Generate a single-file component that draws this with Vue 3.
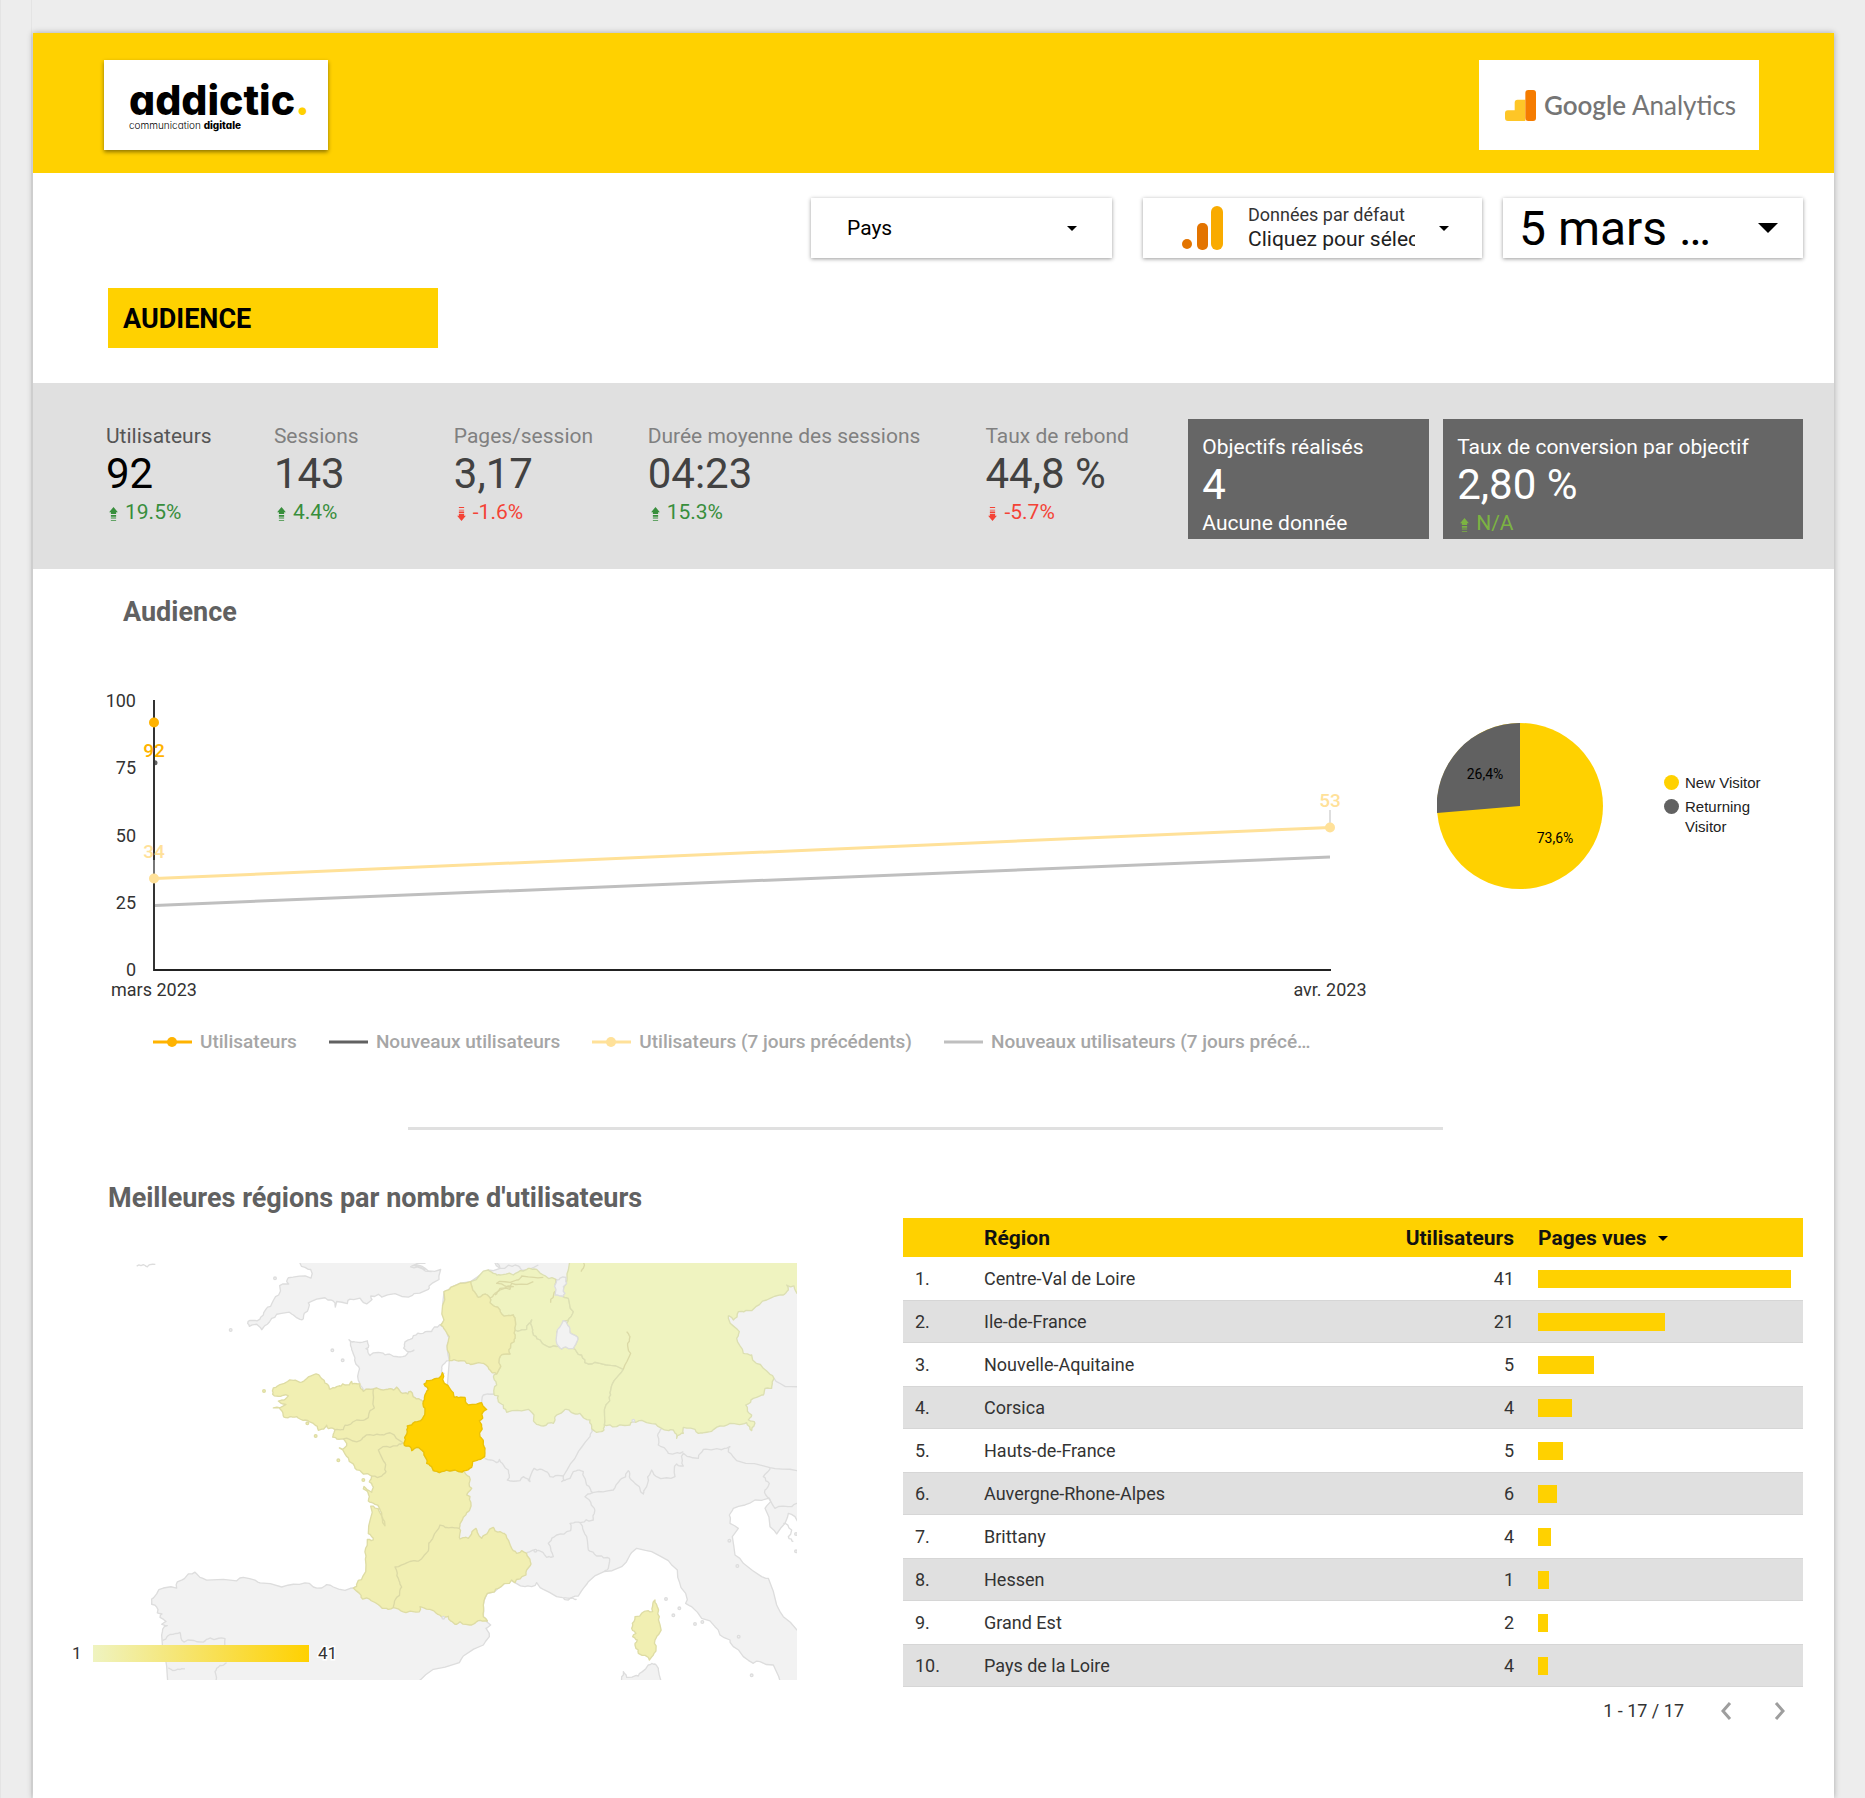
<script setup>
const scores = [
  { label: 'Utilisateurs', value: '92', delta: '19.5%', trend: 'up', strong: true },
  { label: 'Sessions', value: '143', delta: '4.4%', trend: 'up' },
  { label: 'Pages/session', value: '3,17', delta: '-1.6%', trend: 'down' },
  { label: 'Durée moyenne des sessions', value: '04:23', delta: '15.3%', trend: 'up' },
  { label: 'Taux de rebond', value: '44,8 %', delta: '-5.7%', trend: 'down' }
]

const series = [
  { name: 'Utilisateurs', color: '#ffb300', dot: true },
  { name: 'Nouveaux utilisateurs', color: '#616161', dot: false },
  { name: 'Utilisateurs (7 jours précédents)', color: '#ffe199', dot: true },
  { name: 'Nouveaux utilisateurs (7 jours précé…', color: '#bfbfbf', dot: false }
]

const ticks = [100, 75, 50, 25, 0]
const chartY = (v) => 290 - v * 2.69

const regions = [
  { name: 'Centre-Val de Loire', users: 41, share: 100 },
  { name: 'Ile-de-France', users: 21, share: 50 },
  { name: 'Nouvelle-Aquitaine', users: 5, share: 22 },
  { name: 'Corsica', users: 4, share: 13.5 },
  { name: 'Hauts-de-France', users: 5, share: 10 },
  { name: 'Auvergne-Rhone-Alpes', users: 6, share: 7.5 },
  { name: 'Brittany', users: 4, share: 5 },
  { name: 'Hessen', users: 1, share: 4.3 },
  { name: 'Grand Est', users: 2, share: 4 },
  { name: 'Pays de la Loire', users: 4, share: 4 }
]

/* ---- Map outlines. Points come on two sheets; the western one is brought onto the eastern grid. ---- */
const east = (s) => s.trim().split(/\s+/).map((p) => p.split(',').map(Number))
const west = (s) => east(s).map(([x, y]) => [x - 1020, y * 1.0331 - 240])

// Stable pseudo-random offset for a midpoint, so that shared borders stay shared.
const noise = (x, y, k) => {
  const n = Math.sin(x * 12.9898 * k + y * 78.233) * 43758.5453
  return n - Math.floor(n) - 0.5
}
function roughen(points, closed, depth = 2) {
  if (!depth) return points
  const out = []
  const last = closed ? points.length : points.length - 1
  for (let i = 0; i < last; i++) {
    const a = points[i]
    const b = points[(i + 1) % points.length]
    out.push(a)
    const len = Math.hypot(b[0] - a[0], b[1] - a[1])
    if (len > 9) {
      const mx = (a[0] + b[0]) / 2
      const my = (a[1] + b[1]) / 2
      const amp = Math.min(len * 0.4, 10)
      const qx = Math.round(mx)
      const qy = Math.round(my)
      out.push([mx + noise(qx, qy, 1) * amp, my + noise(qx, qy, 2) * amp])
    }
  }
  if (!closed) out.push(points[points.length - 1])
  return roughen(out, closed, depth - 1)
}
const toPath = (pts, closed = true, depth = 2) =>
  'M' + roughen(pts, closed, depth).map(([x, y]) => `${x.toFixed(1)} ${y.toFixed(1)}`).join('L') + (closed ? 'Z' : '')

const medCoast = '262,1143 250,1130 250,1095 262,1060 295,1045 335,1020 345,1028'
const centreWest = '118,698 100,692 95,680 80,670 78,655 62,628 50,622 35,632 30,620 12,610 22,575 22,558 35,555 52,545 68,535 75,505'
const bordGrandEst = '345,270 380,268 395,240 398,270 400,285 420,300 450,322 475,318'
const bordGermany = '520,325 545,345 555,368 600,370 670,388 638,430 632,465 618,495 613,555'

const grey = [
  toPath(west('715,280 720,300 735,312 752,318 753,343 718,337 685,342 680,352 686,360 659,365 656,392 640,408 632,425 618,433 610,450 600,462 585,466 570,466 563,475 568,483 590,477 605,493 612,484 622,477 635,460 650,448 688,442 700,450 720,463 730,461 733,445 745,432 745,415 770,404 795,400 812,406 825,415 826,427 830,411 862,417 870,404 900,401 905,408 920,418 936,405 932,395 955,390 965,398 1005,388 1045,398 1062,388 1105,376 1107,366 1137,347 1142,318 1105,322 1085,308 1055,308 1095,300 1090,280'), true, 1),
  toPath([
    ...east('1230,30 280,30 285,69 300,85 265,90 212,125 152,142 132,155 132,240 122,255 148,362 130,700'),
    ...west('1100,1150 880,1243 855,1250 820,1240 800,1233 785,1243 760,1240 735,1228 700,1232 665,1240 600,1228 585,1220 550,1212 530,1222 440,1220 420,1212 405,1197 385,1202 365,1220 352,1225 350,1243 310,1243 290,1260 275,1275 275,1290 290,1298 292,1315 306,1318 300,1328 318,1340 305,1348 322,1352 308,1362 305,1380 308,1420 320,1470 325,1540 1050,1540 1080,1510'),
    ...east('62,1319 100,1288 178,1268 190,1248 250,1215 268,1190 258,1165 272,1155 260,1145'),
    ...east(medCoast),
    ...east('375,1040 395,1040 410,1028 430,1048 470,1070 510,1075 535,1068 550,1045 565,1025 612,995 665,980 690,945 710,925 755,935 805,962 832,990 838,1025 857,1060 857,1090 875,1100 905,1135 945,1160 960,1185 990,1200 1000,1220 1030,1250 1060,1270 1080,1265 1120,1275 1145,1340 1230,1340 1230,1190 1191,1170 1150,1130 1130,1095 1105,1015 1085,1010 1030,970 1005,945 997,890 1015,865 990,850 988,825 1000,805 1035,795 1065,780 1105,775 1112,785 1095,805 1110,860 1130,882 1155,850 1165,820 1185,830 1230,900')
  ], true, 1),
  toPath([
    ...west('867,522 885,528 922,525 925,545 918,548 930,568 940,560 975,566 1000,570 1022,572 1045,557 1062,552 1040,555 1031,546 1035,528 1060,510 1080,504 1115,498 1140,478 1160,497 1168,515 1163,530'),
    ...east('148,362 125,382 132,400 110,415 80,422 72,432 85,450 75,465 70,485'),
    ...west('1090,703 1075,693 1060,688 1052,672 1028,678 1010,660 1000,668 975,667 940,665 910,672 900,655 895,640 896,600 885,575 875,550')
  ]),
  toPath(east('668,1350 665,1310 670,1295 680,1312 715,1308 745,1275 765,1272 775,1290 800,1350'))
]

const pale = [
  toPath([...east('212,125 265,90 280,100 300,105 340,105 360,92 385,85 410,88 430,105 468,118 465,160 490,170 505,175 520,215 505,240 490,242 470,275 475,318'), ...east(bordGrandEst).reverse(), ...east('345,240 340,225 305,222 300,210 270,188 262,165 235,172 218,150')]),
  toPath([...east(bordGrandEst), ...east('485,327'), ...east(bordGermany), ...east('612,570 590,577 575,560 570,540 540,520 515,518 495,508 465,530 460,550 430,558 405,548 402,525 385,508 320,517 310,495 295,485 295,468 282,463 290,435 282,405 290,402 302,380 300,350 330,342 332,312 345,295')]),
  toPath([...east('510,30 505,90 492,140 490,170 505,175 520,215 505,240 500,250 510,278 533,292'), ...east(bordGermany), ...east('650,560 690,555 700,545 740,548 785,565 820,570 830,595 850,580 850,562 885,568 895,580 930,575 960,558 990,550 1040,548 1055,572 1063,545 1045,540 1055,525 1037,495 1060,475 1090,465 1095,445 1115,445 1122,415 1090,385 1055,345 1030,340 1010,295 1018,275 985,235 985,228 1000,240 1015,215 1055,212 1100,180 1150,165 1165,150 1160,135 1182,138 1191,160 1230,160 1230,30')])
]

const warm = [
  toPath(east('212,125 218,150 235,172 262,165 270,188 300,210 305,222 340,225 345,240 345,270 345,295 332,312 330,342 300,350 302,380 290,402 270,390 258,375 220,372 200,370 170,362 148,362 142,330 148,290 135,270 122,255 132,240 132,155 152,142')),
  toPath([
    ...west('900,650 877,650 875,643 868,653 848,650 830,658 808,665 795,648 785,635 775,623 745,630 725,645 700,640 660,652 640,662 638,680 655,686 685,685 665,697 655,700 678,710 640,720 665,728 672,747 690,745 710,745 735,755 760,765 775,785 800,770 805,780 825,783 818,805 850,810 860,830 848,840 838,836 865,865 885,895 910,912 935,918 928,935 940,950 935,965 912,948 910,955 925,970 925,990 945,1000 965,1025 975,1062 960,1025 940,1005 932,1005 925,1085 940,1103 922,1102'),
    ...west('918,1150 908,1210 890,1238 880,1243 890,1252 908,1275 945,1285 980,1302 1000,1300 1030,1312 1078,1312 1080,1297 1110,1305 1140,1322 1165,1325'),
    ...east('165,1153 180,1145 215,1155 235,1142'),
    ...east(medCoast),
    ...east('378,1005 380,990 393,972 380,940 365,932 350,940 335,925 318,885 300,875 280,862 265,875 245,895 228,865 205,895 180,897 178,865 190,832 208,812 210,770 200,765 215,745 208,710 192,692 150,693'),
    ...east(centreWest),
    ...west('1090,703 1075,693 1060,688 1052,672 1028,678 1010,660 1000,668 975,667 940,665 910,672')
  ]),
  toPath(east('765,1080 772,1100 778,1130 778,1180 765,1200 762,1240 748,1260 715,1240 705,1215 712,1200 698,1190 708,1180 695,1165 697,1150 705,1130 745,1112 758,1115 760,1085'))
]

const centre = toPath([
  ...east('127,398 133,430 160,458 163,472 195,472 205,495 245,488 260,508 250,515 248,535 238,542 245,560 240,590 250,605 255,625 254,650 218,665 215,682 192,692 150,693'),
  ...east(centreWest),
  ...east('70,485 75,465 85,450 72,432 80,422 110,415')
])

const luxembourg = toPath(east('490,242 498,245 510,278 533,292 520,325 485,327 475,318 470,285'))
const meuse = toPath(east('470,120 498,112 500,130 490,140 495,160 488,170 465,165'))

const oliveLines = [
  toPath(west('940,665 943,720 930,728 925,748 890,755 855,770 850,783 825,783'), false),
  toPath(west('1030,822 990,792 960,798 920,798 900,815 860,808 850,810'), false),
  toPath(west('1030,822 1000,830 955,842 975,880 978,905 965,918 935,918'), false),
  toPath(west('1198,1070 1165,1068 1140,1060 1110,1110 1105,1135 1075,1165 1040,1170 1005,1182 1015,1215 1025,1240 1010,1270 1000,1300'), false),
  toPath(east('680,275 690,290 683,310 692,340 670,388'), false),
  toPath(east('545,60 550,85 543,95'), false),
  toPath(east('270,175 285,160 300,145 340,140 290,130 350,120 365,108 430,112'), false),
  toPath(east('285,165 300,150 330,148 335,130 400,125'), false),
  toPath(east('468,118 470,150 452,188'), false)
]

const greyLines = [
  toPath(east('245,488 250,465 295,468'), false),
  toPath(east('254,655 290,668 298,658 325,690 322,720 360,722 370,710 390,725 402,685 425,688 450,710 490,708 530,645 570,590 575,565'), false),
  toPath(east('490,708 485,725 510,715 520,695 550,695 560,735 578,758 640,750 660,720 685,692 690,715 718,740 730,762 740,740 755,690 770,710 825,710 830,672 850,678 850,640 895,655 910,628 960,628 990,620 985,635 1010,662 1110,683 1191,692 1220,690'), false),
  toPath(east('785,565 775,580 775,615 805,640 850,635'), false),
  toPath(east('578,758 555,770 583,805 580,840 540,848 560,890 565,930 590,948 628,955 625,985 612,995'), false),
  toPath(east('540,848 510,850 512,872 470,885 445,910 460,950 440,952 410,932 380,938'), false),
  toPath(east('1122,415 1165,440 1220,432'), false),
  toPath(east('1110,683 1090,710 1108,730 1095,750 1108,775 1125,805 1175,800 1191,790 1220,780'), false),
  toPath(west('308,1395 330,1378 360,1372 372,1400 430,1400 450,1388 495,1390 495,1440'), false),
  toPath(west('325,1475 345,1482 375,1478'), false),
  toPath(west('500,1460 480,1468 465,1485 475,1530'), false),
  toPath(west('230,308 250,304 262,310 286,303'), false),
  toPath(east('285,60 300,85 345,75 365,90 415,75'), false),
  toPath(east('30,80 75,88 45,78 95,95'), false),
  toPath(east('1150,850 1175,870 1165,890 1180,905'), false),
  toPath(east('490,1075 505,1080 530,1078'), false)
]

const islets = [
  [-508, 270], [-203, 331], [-172, 361], [-375, 115], [838, 1105], [820, 1126], [798, 1077], [885, 1152],
  [907, 1146], [1016, 1190], [1055, 1306], [1188, 882], [1188, 934], [1012, 978], [988, 902], [130, 1133], [406, 932], [700, 542]
]
const warmIslets = [[-408, 453], [-253, 588], [-278, 550], [-110, 720], [-185, 661]]
</script>

<template>
  <div class="page">
    <main class="sheet">
      <header class="banner">
        <div class="brand">
          <div class="brand-name">addictic<span class="brand-dot">.</span></div>
          <div class="brand-tag">communication <b>digitale</b></div>
        </div>
        <div class="ga">
          <svg class="ga-mark" viewBox="0 0 32 32" aria-hidden="true">
            <path d="M21 32H3a3 3 0 0 1-3-3v-5a3 3 0 0 1 3-3h7v-8a3 3 0 0 1 3-3h8z" fill="#fec627" />
            <rect x="21" y="0" width="11" height="32" rx="3" fill="#f57c00" />
          </svg>
          <span class="ga-name"><b>Google</b> Analytics</span>
        </div>
      </header>

      <section class="filters" aria-label="Filtres">
        <div class="control control-country">
          <select class="country" aria-label="Pays"><option>Pays</option></select>
          <span class="caret"></span>
        </div>
        <button type="button" class="control control-source">
          <svg class="source-mark" viewBox="0 0 42 44" aria-hidden="true">
            <circle cx="6" cy="38" r="5" fill="#e37400" />
            <rect x="16" y="17" width="11" height="27" rx="5" fill="#e37400" />
            <rect x="30" y="0" width="12" height="44" rx="6" fill="#f9ab00" />
          </svg>
          <span class="source-text">
            <span class="source-small">Données par défaut</span>
            <span class="source-main">Cliquez pour sélectionner</span>
          </span>
          <span class="caret"></span>
        </button>
        <button type="button" class="control control-date">
          <span>5 mars …</span>
          <span class="caret caret-big"></span>
        </button>
      </section>

      <h1 class="tag">AUDIENCE</h1>

      <section class="scores">
        <div v-for="s in scores" :key="s.label" class="score" :class="{ strong: s.strong }">
          <div class="score-label">{{ s.label }}</div>
          <div class="score-value">{{ s.value }}</div>
          <div class="score-delta" :class="s.trend">
            <svg class="arrow" viewBox="0 0 10 16" aria-hidden="true">
              <path d="M5 0L10 6H8V8H2V6H0zM2 9h6v2H2zM2 12h6v1H2zM2 15h6v1H2z" />
            </svg>
            <span>{{ s.delta }}</span>
          </div>
        </div>
        <div class="score dark">
          <div class="score-label">Objectifs réalisés</div>
          <div class="score-value">4</div>
          <div class="score-delta">Aucune donnée</div>
        </div>
        <div class="score dark">
          <div class="score-label">Taux de conversion par objectif</div>
          <div class="score-value">2,80 %</div>
          <div class="score-delta lime">
            <svg class="arrow" viewBox="0 0 10 16" aria-hidden="true">
              <path d="M5 0L10 6H8V8H2V6H0zM2 9h6v2H2zM2 12h6v1H2zM2 15h6v1H2z" />
            </svg>
            <span>N/A</span>
          </div>
        </div>
      </section>

      <h2 class="title title-audience">Audience</h2>

      <section class="charts">
        <div class="trend">
          <svg class="trend-plot" viewBox="0 0 1290 330" role="img" aria-label="Audience">
            <g class="axis-text" text-anchor="end">
              <text v-for="t in ticks" :key="t" x="36" :y="chartY(t) + 6">{{ t }}</text>
            </g>
            <path d="M54 20V291" stroke="#333" stroke-width="2" />
            <path d="M54 290H1231" stroke="#222" stroke-width="2" />
            <path d="M54 180V199M1230 130V147" stroke="#bdbdbd" stroke-width="1" />
            <path :d="`M55 ${chartY(24)}L1230 ${chartY(42)}`" stroke="#bfbfbf" stroke-width="3" />
            <path :d="`M55 ${chartY(34)}L1230 ${chartY(53)}`" stroke="#ffe199" stroke-width="3" />
            <circle cx="54" :cy="chartY(92)" r="5" fill="#ffb300" />
            <circle cx="54" :cy="chartY(34)" r="5" fill="#ffe199" />
            <circle cx="1230" :cy="chartY(53)" r="5" fill="#ffe199" />
            <path :d="`M55 ${chartY(78)}a2 2 0 0 1 0 5z`" fill="#616161" />
            <g class="point-text" text-anchor="middle">
              <text x="54" y="77" fill="#ffb300">92</text>
              <text x="54" y="178" fill="#ffe199">34</text>
              <text x="1230" y="127" fill="#ffe199">53</text>
            </g>
            <g class="axis-text" text-anchor="middle">
              <text x="54" y="316">mars 2023</text>
              <text x="1230" y="316">avr. 2023</text>
            </g>
          </svg>
          <ul class="legend">
            <li v-for="s in series" :key="s.name">
              <svg class="legend-key" viewBox="0 0 39 12" aria-hidden="true">
                <path d="M0 6H39" :stroke="s.color" stroke-width="3" />
                <circle v-if="s.dot" cx="19" cy="6" r="5" :fill="s.color" />
              </svg>
              {{ s.name }}
            </li>
          </ul>
        </div>
        <div class="visitors">
          <svg class="pie" viewBox="0 0 166 166" role="img" aria-label="Visiteurs">
            <circle cx="83" cy="83" r="83" fill="#ffd100" />
            <path d="M83 83V0A83 83 0 0 0 0 90z" fill="#616161" />
            <text x="48" y="56" text-anchor="middle">26,4%</text>
            <text x="118" y="120" text-anchor="middle">73,6%</text>
          </svg>
          <ul class="pie-legend">
            <li><span class="pie-dot new"></span>New Visitor</li>
            <li><span class="pie-dot returning"></span>Returning Visitor</li>
          </ul>
        </div>
      </section>

      <hr class="rule" />

      <section class="regions">
        <div class="map-block">
          <h2 class="title title-map">Meilleures régions par nombre d'utilisateurs</h2>
          <svg class="map" viewBox="63 1263 734 417" role="img" aria-label="Carte des utilisateurs par région">
            <defs>
              <linearGradient id="scale" x1="0" x2="1">
                <stop offset="0" stop-color="#eff3c0" />
                <stop offset="1" stop-color="#ffd100" />
              </linearGradient>
            </defs>
            <g transform="translate(400 1240) scale(.33333)" stroke-width="4" stroke-linejoin="round">
              <path v-for="(d, i) in grey" :key="'g' + i" :d="d" fill="#f2f2f2" stroke="#dddddd" />
              <path v-for="(d, i) in greyLines" :key="'gl' + i" :d="d" fill="none" stroke="#dddddd" />
              <path v-for="(d, i) in pale" :key="'p' + i" :d="d" fill="#eff3c0" stroke="#dcdfb2" />
              <path v-for="(d, i) in warm" :key="'w' + i" :d="d" fill="#f1efb2" stroke="#dedca4" />
              <path v-for="(d, i) in oliveLines" :key="'o' + i" :d="d" fill="none" stroke="#dbd9a5" />
              <path :d="luxembourg" fill="#f2f2f2" stroke="#dddddd" />
              <path :d="meuse" fill="#f2f2f2" stroke="#dddddd" />
              <path :d="centre" fill="#ffd100" stroke="#ebc106" />
              <circle v-for="([x, y], i) in islets" :key="'i' + i" :cx="x" :cy="y" r="4" fill="#f2f2f2" stroke="#dddddd" />
              <circle v-for="([x, y], i) in warmIslets" :key="'wi' + i" :cx="x" :cy="y" r="4" fill="#f1efb2" stroke="#dedca4" />
            </g>
            <rect x="93" y="1645" width="216" height="17" fill="url(#scale)" />
            <g class="scale-text">
              <text x="72" y="1659">1</text>
              <text x="318" y="1659">41</text>
            </g>
          </svg>
        </div>

        <div class="table-block">
          <table>
            <thead>
              <tr>
                <th class="col-rank"></th>
                <th class="col-name">Région</th>
                <th class="col-users">Utilisateurs</th>
                <th class="col-views">Pages vues <span class="caret caret-sort"></span></th>
              </tr>
            </thead>
            <tbody>
              <tr v-for="(r, i) in regions" :key="r.name">
                <td>{{ i + 1 }}.</td>
                <td>{{ r.name }}</td>
                <td class="num">{{ r.users }}</td>
                <td><div class="bar" :style="{ width: r.share + '%' }"></div></td>
              </tr>
            </tbody>
          </table>
          <nav class="pager" aria-label="Pagination">
            <span class="pager-text">1 - 17 / 17</span>
            <button type="button" aria-label="Précédent">
              <svg viewBox="0 0 12 20"><path d="M10 2L3 10l7 8" /></svg>
            </button>
            <button type="button" aria-label="Suivant">
              <svg viewBox="0 0 12 20"><path d="M2 2l7 8-7 8" /></svg>
            </button>
          </nav>
        </div>
      </section>
    </main>
  </div>
</template>

<style>
body {
  margin: 0;
  background: #ededed;
}
</style>

<style scoped>
.page {
  box-sizing: border-box;
  min-height: 100vh;
  padding: 33px 31px 0 33px;
  display: flex;
  background: linear-gradient(to right, #e4e4e4 1px, transparent 1px 31px, #e4e4e4 31px 32px, transparent 32px) #ededed;
  font-family: Roboto, "Liberation Sans", sans-serif;
  color: #000;
}
.sheet {
  flex: 1;
  min-width: 0;
  background: #fff;
  box-shadow: 0 0 6px rgba(0, 0, 0, 0.3);
}
h1, h2, ul { margin: 0; padding: 0; }
ul { list-style: none; }
button, select { font: inherit; color: inherit; }

.banner {
  box-sizing: border-box;
  display: flex;
  justify-content: space-between;
  height: 140px;
  padding: 27px 75px 0 71px;
  background: #ffd100;
}
.brand {
  box-sizing: border-box;
  width: 224px;
  height: 90px;
  padding: 20px 0 0 25px;
  background: #fff;
  box-shadow: 0 2px 4px rgba(0, 0, 0, 0.45);
  font-family: Inter, sans-serif;
}
.brand-name {
  font-size: 41px;
  line-height: 40px;
  font-weight: 800;
  font-feature-settings: "cv11";
  white-space: nowrap;
}
.brand-dot { color: #ffd100; }
.brand-tag {
  font-size: 10px;
  line-height: 10px;
  font-weight: 300;
  font-feature-settings: "cv11";
}
.brand-tag b { font-weight: 800; }
.ga {
  box-sizing: border-box;
  width: 280px;
  height: 90px;
  padding-left: 26px;
  display: flex;
  align-items: center;
  gap: 8px;
  background: #fff;
}
.ga-mark { width: 31px; height: 31px; }
.ga-name {
  font-family: Lato, sans-serif;
  font-size: 26px;
  color: #757575;
  white-space: nowrap;
}
.ga-name b { font-weight: 600; }

.filters {
  display: flex;
  justify-content: flex-end;
  padding: 25px 31px 0;
}
.control {
  box-sizing: border-box;
  height: 60px;
  padding: 0;
  border: 0;
  background: #fff;
  box-shadow: 0 1px 4px rgba(0, 0, 0, 0.4);
  display: flex;
  align-items: center;
  text-align: left;
  white-space: nowrap;
}
.control-country {
  position: relative;
  width: 301px;
  margin-right: 31px;
  font-size: 21px;
}
.country {
  width: 100%;
  height: 100%;
  padding: 0 36px;
  border: 0;
  background: none;
  appearance: none;
}
.control-country .caret { position: absolute; right: 35px; }
.caret {
  width: 0;
  height: 0;
  border: 5px solid transparent;
  border-top-color: #000;
  border-bottom: 0;
}
.control-source {
  width: 339px;
  margin-right: 21px;
  padding-left: 38px;
}
.source-mark { width: 42px; height: 44px; }
.source-text {
  width: 167px;
  margin: 0 24px 0 25px;
  overflow: hidden;
  display: flex;
  flex-direction: column;
}
.source-small { font-size: 18px; line-height: 22px; color: #333; }
.source-main { font-size: 21px; line-height: 26px; color: #212121; }
.control-date {
  width: 300px;
  padding: 0 25px 0 16px;
  justify-content: space-between;
  font-size: 48px;
}
.caret-big { border-width: 10px 10px 0; }

.tag {
  box-sizing: border-box;
  width: 330px;
  height: 60px;
  margin: 30px 0 35px 75px;
  padding-left: 15px;
  background: #ffd100;
  font-size: 27px;
  line-height: 62px;
  font-weight: 700;
}

.scores {
  display: grid;
  grid-template-columns: 168fr 180fr 194fr 338fr 203fr 241fr 14fr 360fr;
  padding: 36px 31px 30px 73px;
  background: #e0e0e0;
  white-space: nowrap;
}
.score { padding-top: 5px; font-size: 21px; }
.score-label { line-height: 24px; color: #808080; }
.score-value { font-size: 42px; line-height: 52px; color: #424242; }
.score-delta { line-height: 24px; display: flex; align-items: center; }
.strong .score-label { color: #555; }
.strong .score-value { color: #000; }
.up { color: #388e3c; }
.down { color: #f44336; }
.lime { color: #7cb342; }
.arrow {
  width: 9px;
  height: 14px;
  margin: 4px 7px 0 3px;
  fill: currentColor;
}
.down .arrow { transform: rotate(180deg); }
.dark {
  height: 104px;
  padding: 16px 0 0 14px;
  background: #666;
  color: #fff;
}
.dark:last-child { grid-column: 8; }
.dark .score-label, .dark .score-value { color: #fff; }

.title {
  font-size: 27px;
  line-height: 32px;
  font-weight: 700;
  color: #616161;
}
.title-audience { margin: 27px 0 52px 90px; }

.charts {
  display: grid;
  grid-template-columns: 1290fr 413fr;
  padding: 0 31px 0 67px;
}
.trend-plot { display: block; width: 100%; fill: none; }
.axis-text { font-size: 18px; fill: #333; }
.point-text { font-size: 19px; font-weight: 500; }
.legend {
  display: flex;
  gap: 32px;
  padding: 20px 0 0 53px;
  font-size: 19px;
  line-height: 24px;
  font-weight: 500;
  color: #a6a6a6;
  white-space: nowrap;
}
.legend li { display: flex; align-items: center; gap: 8px; }
.legend-key { width: 39px; height: 12px; fill: none; }
.visitors {
  display: flex;
  align-items: flex-start;
  padding: 43px 0 0 47px;
}
.pie { width: 166px; height: 166px; font-size: 14px; }
.pie-legend {
  width: 130px;
  margin: 50px 0 0 61px;
  font-family: "Liberation Sans", Arial, sans-serif;
  font-size: 15px;
  line-height: 20px;
  color: #222;
}
.pie-legend li { display: flex; gap: 6px; margin-bottom: 4px; }
.pie-dot {
  flex: none;
  width: 15px;
  height: 15px;
  margin-top: 2px;
  border-radius: 50%;
}
.new { background: #ffd100; }
.returning { background: #616161; }

.rule {
  width: 1035px;
  height: 3px;
  margin: 73px 0 52px 375px;
  border: 0;
  background: #e0e0e0;
}

.regions {
  display: grid;
  grid-template-columns: 734fr 900fr;
  column-gap: 106px;
  padding: 0 31px 30px 30px;
}
.title-map { margin: 0 0 49px 45px; white-space: nowrap; }
.map { display: block; width: 100%; overflow: hidden; }
.scale-text {
  font-size: 17px;
  fill: #333;
  stroke: #fff;
  stroke-width: 3px;
  paint-order: stroke;
}

.table-block { padding-top: 36px; }
table {
  width: 100%;
  table-layout: fixed;
  border-collapse: collapse;
  font-size: 18px;
  color: #333;
}
th {
  height: 39px;
  padding: 0 12px;
  background: #ffd100;
  font-size: 21px;
  font-weight: 700;
  color: #111;
  text-align: left;
}
.col-rank { width: 45px; }
.col-users { width: 120px; text-align: right; }
.col-views { width: 253px; }
.caret-sort {
  display: inline-block;
  margin: 0 0 4px 6px;
}
td {
  height: 43px;
  box-sizing: border-box;
  padding: 0 12px;
}
tbody tr:nth-child(even) td {
  background: #e0e0e0;
  box-shadow: inset 0 1px #d6d6d6, inset 0 -1px #d6d6d6;
}
.num, th.col-users { text-align: right; }
.bar { height: 18px; background: #ffd100; }
.pager {
  display: flex;
  justify-content: flex-end;
  align-items: center;
  height: 46px;
  gap: 8px;
  font-size: 18px;
  color: #333;
}
.pager-text { margin-right: 11px; }
.pager button {
  width: 46px;
  height: 46px;
  padding: 5px 0 0;
  border: 0;
  background: none;
}
.pager svg {
  width: 12px;
  height: 20px;
  fill: none;
  stroke: #9e9e9e;
  stroke-width: 3;
}
</style>
